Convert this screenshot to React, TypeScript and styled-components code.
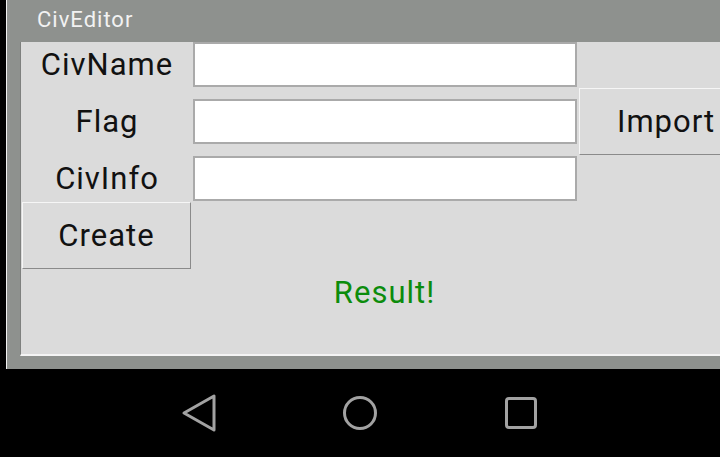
import React from 'react';
import styled, { createGlobalStyle } from 'styled-components';

const GlobalStyle = createGlobalStyle`
  html, body {
    margin: 0;
    padding: 0;
    background: #000;
  }
  * {
    box-sizing: border-box;
  }
`;

const Screen = styled.div`
  width: 720px;
  height: 457px;
  overflow: hidden;
  background: #000;
  display: flex;
  flex-direction: column;
  font-family: Roboto, 'Noto Sans', sans-serif;
`;

const AppWindow = styled.div`
  height: 369px;
  margin-left: 6px;
  border-left: 1px solid #f0f0f0;
  background: #8e918e;
  display: flex;
  flex-direction: column;
`;

const TitleBar = styled.div`
  height: 42px;
  padding-left: 30px;
  display: flex;
  align-items: center;
  padding-bottom: 4px;
  color: #f2f2f2;
  font-size: 22px;
  letter-spacing: 1px;
`;

const Body = styled.div`
  padding-left: 13px;
  padding-bottom: 13px;
`;

const Panel = styled.div`
  width: 728px;
  height: 314px;
  background: #dbdbdb;
  border-left: 1px solid #7e807e;
  border-bottom: 2px solid #f4f4f4;
  display: grid;
  grid-template-columns: 172px 386px 1fr;
  grid-template-rows: 57px 57px 46px 66px 1fr;
`;

const Label = styled.div<{ $row: number }>`
  grid-column: 1;
  grid-row: ${(p) => p.$row};
  height: 45px;
  display: flex;
  align-items: center;
  justify-content: center;
  font-size: 31px;
  letter-spacing: 1px;
  color: #111;
`;

const TextBox = styled.input<{ $row: number }>`
  grid-column: 2;
  grid-row: ${(p) => p.$row};
  width: 384px;
  height: 45px;
  margin: 0;
  border: 2px solid #aaaaaa;
  background: #fff;
  outline: none;
`;

const Button = styled.button`
  height: 67px;
  margin: 0;
  padding: 0;
  background: #dbdbdb;
  border-top: 1px solid #f6f6f6;
  border-left: 1px solid #f6f6f6;
  border-right: 1px solid #8a8a8a;
  border-bottom: 1px solid #8a8a8a;
  font-family: Roboto, 'Noto Sans', sans-serif;
  font-size: 31px;
  letter-spacing: 1px;
  color: #111;
  display: flex;
  align-items: center;
  justify-content: center;
`;

const ImportButton = styled(Button)`
  grid-column: 3;
  grid-row: 2;
  width: 160px;
  align-self: start;
  margin-top: -11px;
  justify-content: flex-start;
  padding-left: 37px;
`;

const CreateButton = styled(Button)`
  grid-column: 1;
  grid-row: 4;
  width: 169px;
  margin-left: 1px;
`;

const Result = styled.div`
  grid-column: 1 / span 3;
  grid-row: 5;
  text-align: center;
  font-size: 31px;
  letter-spacing: 1px;
  color: #0c8c0c;
  padding-top: 6px;
`;

const NavBar = styled.div`
  flex: 1;
  display: flex;
  align-items: center;
  justify-content: center;
  gap: 121px;
`;

const NavIcon = styled.svg`
  width: 40px;
  height: 40px;
  fill: none;
  stroke: #a2a2a2;
  stroke-width: 3;
  stroke-linejoin: round;
  stroke-linecap: round;
`;

const App = () => {
  return (
    <Screen>
      <GlobalStyle />
      <AppWindow>
        <TitleBar>CivEditor</TitleBar>
        <Body>
          <Panel>
            <Label $row={1}>CivName</Label>
            <TextBox $row={1} />
            <Label $row={2}>Flag</Label>
            <TextBox $row={2} />
            <ImportButton>Import</ImportButton>
            <Label $row={3}>CivInfo</Label>
            <TextBox $row={3} />
            <CreateButton>Create</CreateButton>
            <Result>Result!</Result>
          </Panel>
        </Body>
      </AppWindow>
      <NavBar>
        <NavIcon viewBox="0 0 40 40">
          <path d="M5 20 L35 3 L35 37 Z" />
        </NavIcon>
        <NavIcon viewBox="0 0 40 40">
          <circle cx="20" cy="20" r="15.5" />
        </NavIcon>
        <NavIcon viewBox="0 0 40 40">
          <rect x="5.5" y="5.5" width="29" height="29" rx="2.5" />
        </NavIcon>
      </NavBar>
    </Screen>
  );
};

export default App;
